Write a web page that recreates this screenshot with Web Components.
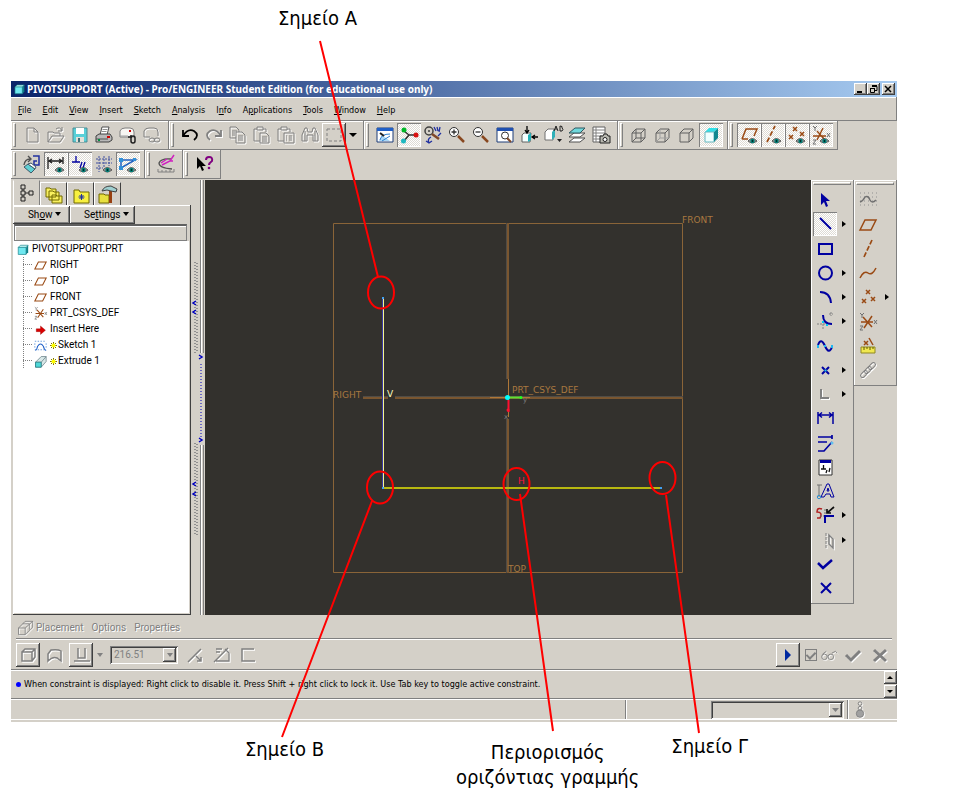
<!DOCTYPE html>
<html lang="el">
<head>
<meta charset="utf-8">
<title>PIVOTSUPPORT (Active) - Pro/ENGINEER</title>
<style>
	body {
		margin: 0;
		background: #ffffff;
	}
</style>
</head>
<body>
<annotated-page></annotated-page>

<script>
const shared = `
	:host { display: block; box-sizing: border-box; }
	* { box-sizing: border-box; }
	button {
		margin: 0;
		padding: 0;
		border: 0;
		background: none;
		font: inherit;
		color: inherit;
	}
	svg { display: block; }
	.raised {
		background: #d4d0c8;
		box-shadow: inset -1px -1px #404040, inset 1px 1px #ffffff, inset -2px -2px #808080;
	}
	.sunken {
		background: #d4d0c8;
		box-shadow: inset 1px 1px #808080, inset -1px -1px #ffffff, inset 2px 2px #404040;
	}
`;

const eye = `<path d="M11 18q4-5 9 0q-5 4-9 0z" fill="#9a9a9a" stroke="#404040" stroke-width=".8"/><circle cx="15.5" cy="18" r="2.2" fill="#008078"/><circle cx="15.5" cy="18" r=".8" fill="#000"/>`;
const x = (cx, cy, r, c) => `<path d="M${cx - r} ${cy - r}l${2 * r} ${2 * r}m0 ${-2 * r}l${-2 * r} ${2 * r}" stroke="${c}" stroke-width="1.5"/>`;
const brown = '#9a4a14';
const navy = '#0000a0';

// every glyph is drawn in a 24 x 24 box
const icons = {
	newFile: `<g class="dim"><path d="M7 5h7l4 4v10H7zM14 5v4h4"/></g>`,
	open: `<g class="dim"><path d="M4 19V9h5l1 1h6v3M4 19l4-6h12l-4 6zM12 6q4-3 6 2m0-4v4h-4"/></g>`,
	save: `<path d="M5 5h14v14H5z" fill="#58d0d8" stroke="#4c8c94"/><path d="M8 5h8v6H8z" fill="#fff"/><path d="M8 14h8v5H8z" fill="#e4e0d8"/><path d="M10 15h2v4h-2z" fill="#407078"/>`,
	print: `<path d="M8 12l2-8h7l-2 8z" fill="#fff" stroke="#505050"/><path d="M10.500 6.500h5m-6 2h5" stroke="#909090"/><path d="M4 13l3-2h11l2 3v3l-3 2H4z" fill="#b8b8b8" stroke="#404040"/><path d="M4 16h12" stroke="#505050"/><path d="M6 16h2v2H6z" fill="#009040"/><path d="M15 13h3v2h-3z" fill="#d00000"/>`,
	mail: `<path d="M4 14V8q1-3 5-3h5q4 0 4 4v5z" fill="#f8f6f2" stroke="#808080"/><path d="M4 13h8" stroke="#a0a0a0"/><path d="M13 8h2" stroke="#d00000" stroke-width="2"/><path d="M12 14h3v-2" stroke="#202020" stroke-width="1.500"/><rect x="15" y="13" width="4" height="7" rx="2" stroke="#202020" stroke-width="1.500"/>`,
	mailLink: `<g class="dim"><path d="M4 14V8q1-3 5-3h5q4 0 4 4v4M4 14h6"/><ellipse cx="12" cy="17" rx="3" ry="2"/><ellipse cx="17" cy="17" rx="3" ry="2"/></g>`,
	undo: `<path d="M5 7v6h6" stroke="#000" stroke-width="1.800"/><path d="M5 13q5-8 11-5q6 4 0 9" stroke="#000" stroke-width="1.800"/>`,
	redo: `<g class="dim"><path d="M19 7v6h-6" stroke-width="1.800"/><path d="M19 13q-5-8-11-5q-6 4 0 9" stroke-width="1.800"/></g>`,
	copy: `<g class="dim"><path d="M10 15H4V4h6l3 3v2M6 8h5M6 10h3M6 12h3M10 9h6l3 3v8h-9zM12 13h5M12 15h5M12 17h5"/></g>`,
	paste: `<g class="dim"><path d="M10 18H4V6h3M13 6h3v3M7 4h6v3H7zM10 10h6l3 3v7h-9zM12 14h5M12 16h5M12 18h5"/></g>`,
	pasteSpecial: `<g class="dim"><path d="M10 18H4V6h3M13 6h3v3M7 4h6v3H7zM10 10h10v10H10zM12 13h1m2 0h3m-6 2h1m2 0h3m-6 2h1m2 0h3"/></g>`,
	find: `<g class="dim"><path d="M4 18v-6l3-7h2l1 4h4l1-4h2l3 7v6h-5v-6h-6v6zM7 8v10M17 8v10"/></g>`,
	select: `<path d="M5 6h14v12H5z" stroke="#808080" stroke-dasharray="3 2"/>`,
	repaint: `<path d="M4 5h16v14H4z" fill="#fff" stroke="#1c3c78"/><path d="M4 5h16v3H4z" fill="#2060c8"/><path d="M9 12l8 6H6z" fill="#a8d8f8"/><path d="M7 17q1-6 10-6M9 18l8-5" stroke="#3080d0"/><path d="M7 10l4 3" stroke="#202020" stroke-width="2"/>`,
	spin: `<path d="M12 12l-5-4m5 4l-5 6m5-6h6" stroke="#303030" stroke-width="1.500"/><circle cx="7" cy="7" r="2.500" fill="#00b828"/><circle cx="6.500" cy="18" r="2.500" fill="#20b8c0"/><circle cx="19" cy="12" r="2.500" fill="#d81010"/>`,
	orient: `<circle cx="8" cy="8" r="4" stroke="#404040" stroke-width="1.500"/><circle cx="8" cy="8" r="1" fill="#404040"/><path d="M11 11l7 5" stroke="#804828" stroke-width="2.500"/><path d="M13 4l2 4m1-4l1 4m2-4l-1 5m2 1l-3 3M10 14q-4 2-2 6m-3-2l3 2 3-2" stroke="#2030a0" stroke-width="1.300"/>`,
	zoomIn: `<circle cx="9" cy="9" r="4.500" fill="#fff" stroke="#303030"/><path d="M6.500 9h5M9 6.500v5" stroke="#303030" stroke-width="1.300"/><path d="M13 13l6 6" stroke="#884820" stroke-width="2.500"/>`,
	zoomOut: `<circle cx="9" cy="9" r="4.500" fill="#fff" stroke="#303030"/><path d="M6.500 9h5" stroke="#303030" stroke-width="1.300"/><path d="M13 13l6 6" stroke="#884820" stroke-width="2.500"/>`,
	refit: `<path d="M4 5h16v14H4z" fill="#fff" stroke="#1c3c78"/><path d="M4 5h16v3H4z" fill="#2050b0"/><circle cx="12" cy="12.500" r="3.500" stroke="#303030"/><path d="M14 15l4 4" stroke="#804828" stroke-width="2"/>`,
	viewDir: `<path d="M5 12l2-2h7l-1 9H5z" fill="#f4ffff" stroke="#606060"/><path d="M11 12l3-2v7l-3 2z" fill="#20b0b8"/><path d="M10 3v6m-2-2l2 3 2-3M21 14h-5m2-2l-3 2 3 2" stroke="#000" stroke-width="1.300"/>`,
	savedViews: `<path d="M4 9l3-3h6l-1 11H4z" fill="#fff" stroke="#707070"/><path d="M11 9l3-3v8l-3 3z" fill="#30b0b8"/><path d="M13 8l2-5 2 5m-3-2h2M19 3v5h2q2-2 0-3q1-2-2-2" stroke="#202020"/><path d="M16 16h5l-2.500 3z" fill="#202020"/>`,
	layers: `<path d="M4 19l5-4h11l-5 4zM4 14l5-4h11l-5 4z" fill="#fff" stroke="#505050"/><path d="M4 10l6-5h10l-5 5z" fill="#70d8dc" stroke="#305860"/>`,
	viewManager: `<path d="M4 4h12v15H4z" fill="#fff" stroke="#606060"/><path d="M4 7h12M4 10h12M4 13h9M4 16h7M7 4v15" stroke="#808080"/><path d="M11 13h3l1-2h3l1 2h2v7H11z" fill="#b8b8b0" stroke="#202020"/><circle cx="16" cy="16.500" r="2" fill="#fff" stroke="#202020"/>`,
	wireframe: `<path d="M5 10h9v9H5zM9 6h9v9H9zM5 10l4-4m5 4l4-4M5 19l4-4m5 4l4-4" stroke="#606060"/>`,
	hiddenLine: `<path d="M5 10h9v9H5zM5 10l4-4h9v9l-4 4m0-9l4-4" stroke="#606060"/><path d="M9 6v9h9M5 19l4-4" stroke="#a0a0a0"/>`,
	noHidden: `<path d="M5 10h9v9H5zM5 10l4-4h9v9l-4 4m0-9l4-4" stroke="#606060"/>`,
	shaded: `<path d="M6 9l4-4h9l-4 4z" fill="#30e0e8"/><path d="M6 9h9v10H6z" fill="#f0ffff" stroke="#68b8c0"/><path d="M15 9l4-4v10l-4 4z" fill="#108890"/>`,
	planeEye: `<path d="M5 16l4-10h11l-3 7M5 16h6" stroke="${brown}" stroke-width="1.500"/>${eye}`,
	axisEye: `<path d="M6 19l8-16" stroke="${brown}" stroke-width="1.700" stroke-dasharray="5 2"/>${eye}`,
	pointEye: x(10, 6, 2, brown) + x(6, 14, 2, brown) + x(17, 11, 2, brown) + eye,
	csysEye: `<path d="M4 13h13M8 8l8 9M14 5L8 17" stroke="${brown}" stroke-width="1.400"/><path d="M4 3l2 2 2-2M6 5v3M18 10l3 4m0-4l-3 4M4 17h3l-3 4h3" stroke="#707070"/>${eye}`,

	toSketch: `<path d="M13 4h6v9h-5V9h3" stroke="#2030a0" stroke-width="1.500"/><path d="M4 13q1-6 6-6M8 4l3 3-3 3" stroke="#505050" stroke-width="1.400"/><path d="M4 15l4-3 7 5-4 4z" fill="#60d0d4" stroke="#405868"/><path d="M8 12l3-1 5 4-1 2z" fill="#fff" stroke="#405868"/>`,
	dimEye: `<path d="M4 5v12M19 5v7M5 9h13M8 7L5 9l3 2M15 7l3 2-3 2" stroke="#202020" stroke-width="1.300"/>${eye}`,
	consEye: `<path d="M4 10h8M8 4v6M12 16l2-6m1 6l2-6" stroke="${navy}" stroke-width="1.300"/>${eye}`,
	gridEye: `<path d="M7 4v16M12 4v11M17 4v10M4 7h16M4 11h16M4 16h7" stroke="#4050a0" stroke-dasharray="2 1"/>${eye}`,
	vertexEye: `<path d="M5 8h14L5 16z" stroke="#2060c0" stroke-width="1.500"/><path d="M3 6h4v4H3zM17 6h3v3h-3zM3 14h4v4H3z" fill="#3090d8"/>${eye}`,
	analysis: `<path d="M17 7q-10-1-12 4q0 5 13 6" stroke="#505050" stroke-width="1.300"/><path d="M7 11l6-4M8 13l8-4 4-6M16 9l3 0" stroke="#d020c0" stroke-width="1.500"/><path d="M4 17v3h16v-3M8 18v2m4-2v2m4-2v2" stroke="#808080"/>`,
	help: `<path d="M5 5v12l3-3 2 5 2-1-2-4h4z" fill="#000"/><path d="M14 8q0-3 3-3q4 0 3 4q-3 2-3 4" stroke="#800080" stroke-width="2"/><circle cx="17" cy="16" r="1.300" fill="#800080"/>`,

	arrow: `<path d="M8 5v12l3-3 2 5 2-1-2-5h4z" fill="${navy}"/>`,
	line: `<path d="M7 6l11 11" stroke="${navy}" stroke-width="2"/>`,
	rect: `<path d="M6 7h13v10H6z" stroke="${navy}" stroke-width="2"/>`,
	circle: `<circle cx="12.500" cy="12" r="6.500" stroke="${navy}" stroke-width="2"/>`,
	arc: `<path d="M7 7q10 0 11 11" stroke="${navy}" stroke-width="2"/>`,
	fillet: `<path d="M4 15h8m-2 0v6m8-18v4m-2-2h4" stroke="#808080" stroke-dasharray="2 1"/><path d="M10 6q0 9 9 9" stroke="${navy}" stroke-width="2"/><path d="M9 12h2v2H9zM13 15h2v2h-2z" fill="#00c8f0"/>`,
	spline: `<path d="M5 11q3-8 7 1t7 1" stroke="${navy}" stroke-width="2"/><path d="M4 11h2v3H4zM11 11h2v2h-2zM18 11h2v3h-2z" fill="#20b8f0"/>`,
	point: `<path d="M9 9l7 7m0-7l-7 7" stroke="${navy}" stroke-width="2"/><path d="M11.500 11.500h2v2h-2z" fill="#20c8f0"/>`,
	useEdge: `<g class="dim"><path d="M8 7v9h8" stroke-width="2"/></g>`,
	dimension: `<path d="M5 6v12M20 6v12M6 9h13M9 6.500L6 9l3 2.500M16 6.500L19 9l-3 2.500" stroke="${navy}" stroke-width="1.500"/>`,
	modify: `<path d="M5 6h14M19 4v4M5 11h9M5 20h6l8-9" stroke="${navy}" stroke-width="1.700"/><circle cx="19" cy="12" r="1.500" fill="#60c0f0"/>`,
	constrain: `<path d="M6 5h13v15H6z" fill="#fff" stroke="#303030"/><path d="M7 5h11v3H7z" fill="${navy}"/><path d="M8 14h5m-2.500-4v4M13 18l1-3m2 2l1-4" stroke="#101010" stroke-width="1.300"/>`,
	text: `<path d="M6 6v12M4 6h5" stroke="#707070"/><path d="M8 18l6-13h2l5 13h-3l-1-3h-4l-2 3zM14 12h2l-1-3z" stroke="${navy}"/><circle cx="6" cy="18" r="1.700" stroke="#3090d0"/>`,
	trim: `<path d="M9 6q-5-2-5 3 6 0 3 6l-3 0" stroke="#b02020" stroke-width="1.500"/><path d="M7 13h5m0-7v6" stroke="#707070" stroke-dasharray="2 1"/><path d="M12 20v-7h9" stroke="${navy}" stroke-width="2"/><path d="M21 4l-7 6m0-4v4h4" stroke="#101010" stroke-width="1.700"/>`,
	mirror: `<g class="dim"><path d="M13 5v15" stroke-dasharray="3 1"/><path d="M16 7v9l4 4v-9z" stroke-width="1.500"/></g>`,
	done: `<path d="M5 11l5 5 9-8" stroke="${navy}" stroke-width="2.500"/>`,
	quit: `<path d="M8 7l10 10m0-10L8 17" stroke="${navy}" stroke-width="2"/>`,

	sketchTool: `<path d="M4 5h17M4 9h17M4 13h17M4 17h17" stroke="#909090" stroke-dasharray="1 3"/><path d="M4 14q3-1 5-5 3-2 5 3 2 4 6 0" stroke="#707070" stroke-width="1.500"/>`,
	plane: `<path d="M4 17l5-10h11l-5 10z" stroke="${brown}" stroke-width="1.500"/>`,
	axis: `<path d="M8 20l8-17" stroke="${brown}" stroke-width="1.700" stroke-dasharray="5 2"/>`,
	curve: `<path d="M4 17q4-8 8-5t8-5" stroke="${brown}" stroke-width="1.500"/>`,
	points: x(12, 7, 2, brown) + x(8, 16, 2, brown) + x(17, 14, 2, brown),
	csys: `<path d="M5 12h12M7 7l9 10M16 6L8 18" stroke="${brown}" stroke-width="1.500"/><path d="M4 3l2 2 2-2M6 5v3M18 10l3 4m0-4l-3 4M4 16h3l-3 4h3" stroke="#707070"/>`,
	analysisPt: x(10, 9, 2, brown) + `<path d="M13 4l4 7" stroke="${brown}" stroke-width="1.500"/><path d="M5 13h14v6H5z" fill="#f0e850" stroke="#908820"/><path d="M8 13v3m3-3v2m3-2v3m3-3v2" stroke="#605800"/>`,
	chain: `<g class="dim"><rect x="4" y="14" width="8" height="4" rx="2" transform="rotate(-45 8 16)"/><rect x="8" y="10" width="8" height="4" rx="2" transform="rotate(-45 12 12)"/><rect x="12" y="6" width="8" height="4" rx="2" transform="rotate(-45 16 8)"/></g>`,

	tabTree: `<path d="M6 4h4v4H6zM6 10h4v4H6zM6 16h4v4H6zM14 10h4v4h-4zM8 8v2m0 4v2m2-4h4" stroke="#202020"/>`,
	tabFolders: `<path d="M4 5h4l1 1h5v8H4zM7 8h4l1 1h5v8H7zM10 12h4l1 1h5v7H10z" fill="#f8f060" stroke="#706800"/>`,
	tabFavorites: `<path d="M5 7h5l1 2h9v11H5z" fill="#f8f040" stroke="#706800"/><path d="M12.500 11v6m-3-3h6m-5-2l4 4m0-4l-4 4" stroke="#2030a0"/>`,
	tabHammer: `<path d="M3 11h5l1 1h4v8H3z" fill="#e8e040" stroke="#706800"/><path d="M14.500 8v12" stroke="#984010" stroke-width="3"/><path d="M6 8q2-5 9-5l6 3-1 3-5-1-4-1z" fill="#a0d0d0" stroke="#404040"/>`,
	part: `<path d="M6 9l3-3h11l-3 3z" fill="#d0ffff" stroke="#208890"/><path d="M17 9l3-3v10l-3 3z" fill="#108088"/><path d="M6 9h11v10H6z" fill="#70e8f0" stroke="#208890"/>`,
	insert: `<path d="M6 11h6V7l7 6-7 6v-4H6z" fill="#d80000" stroke="#900000" stroke-width=".5"/>`,
	sketch: `<path d="M4 6h16M4 18h16M4 9v8m16-8v8" stroke="#3078d0" stroke-dasharray="2 2"/><path d="M5 19q2-1 3-6 4-6 8 0 1 5 4 6" stroke="#2060c8" stroke-width="1.500"/>`,
	extrude: `<path d="M5 13h8v7H5zM5 13l8-8h7v7l-7 8M13 13l7-8" stroke="#607880" fill="#d8e8e8"/><path d="M5 13h8v7H5z" fill="#50d8d8" stroke="#207880"/>`,

	ghostExtrude: `<g class="dim"><path d="M3 12h8v8H3zM3 12l8-8h9v7l-9 9M11 12l9-8M8 7h8v7"/></g>`,
	solid: `<g class="dim"><path d="M6 9h10v9H6zM6 9l3-3h10v8l-3 4M16 9l3-3" stroke-width="1.500"/></g>`,
	surface: `<g class="dim"><path d="M5 18V11l3-4q7-1 10 1v10l-4-3q-4-2-9 3z" stroke-width="1.500"/></g>`,
	depth: `<g class="dim"><path d="M9 5v10h7V5M5 18h16" stroke-width="1.500"/></g>`,
	flip: `<g class="dim"><path d="M5 19L18 6M13 13l5 5m0-4v4h-4" stroke-width="1.500"/></g>`,
	removeMat: `<g class="dim"><path d="M5 19L19 5M7 18h13V10l-4-4M7 6h6M7 9h4" stroke-width="1.300"/></g>`,
	thicken: `<g class="dim"><path d="M18 6H6v12h13" stroke-width="1.500"/></g>`,
	play: `<path d="M9 6l6 6-6 6z" fill="#0028a0"/>`,
	glasses: `<g class="dim"><circle cx="7" cy="14" r="3"/><circle cx="14" cy="14" r="3"/><path d="M10 13h1M5 11l4-3M15 10l4-2 2 2"/></g>`,
	okDim: `<g class="dim"><path d="M5 12l5 5 9-9" stroke-width="3"/></g>`,
	noDim: `<g class="dim"><path d="M6 7l12 11m0-11L6 18" stroke-width="3"/></g>`,
	light: `<g class="dim"><circle cx="12" cy="5" r="2"/><circle cx="12" cy="10" r="2"/><circle cx="12" cy="16" r="4" fill="#a0a0a0"/></g>`
};

function icon(name, size = 24) {
	return `<svg width="${size}" height="${size}" viewBox="0 0 24 24" fill="none" aria-hidden="true">
		<style>.dim { stroke: #808080; filter: drop-shadow(1px 1px 0 #ffffff); }</style>
		${icons[name]}
	</svg>`;
}

class ToolButton extends HTMLElement {
	connectedCallback() {
		this.attachShadow({ mode: 'open' });
		const name = this.getAttribute('icon');
		const mode = this.getAttribute('mode') || '';
		this.shadowRoot.innerHTML = `
			<style>${shared}
				:host { display: flex; align-items: center; }
				button { width: 24px; height: 24px; }
				.pressed {
					background: repeating-conic-gradient(#ffffff 0 25%, #dedbd4 0 50%) 0 0 / 2px 2px;
					box-shadow: inset 1px 1px #808080, inset -1px -1px #ffffff;
				}
				.flyout {
					margin-left: 5px;
					border: 3px solid transparent;
					border-left: 4px solid #000000;
					border-right: 0;
				}
			</style>
			<button type="button" class="${mode}" aria-label="${name}">${icon(name)}</button>
			${this.hasAttribute('flyout') ? '<span class="flyout"></span>' : ''}
		`;
	}
}
customElements.define('tool-button', ToolButton);

class ToolGroup extends HTMLElement {
	connectedCallback() {
		this.attachShadow({ mode: 'open' });
		this.shadowRoot.innerHTML = `
			<style>${shared}
				:host {
					display: flex;
					align-items: center;
					height: 29px;
					padding: 0 4px 0 2px;
					border: 1px solid #808080;
					border-width: 0 1px 1px 0;
					box-shadow: inset 1px 1px #ffffff;
				}
				.grip {
					width: 3px;
					height: 24px;
					margin-right: 4px;
					border: 1px solid #ffffff;
					border-right-color: #808080;
					border-bottom-color: #808080;
				}
			</style>
			<span class="grip"></span>
			<slot></slot>
		`;
	}
}
customElements.define('tool-group', ToolGroup);

class ToolColumn extends HTMLElement {
	connectedCallback() {
		this.attachShadow({ mode: 'open' });
		this.shadowRoot.innerHTML = `
			<style>${shared}
				:host {
					display: flex;
					flex-direction: column;
					align-self: flex-start;
					justify-content: space-between;
					width: 43px;
					padding: 2px 2px 3px;
					border: 1px solid #808080;
					border-width: 0 1px 1px 0;
					box-shadow: inset 1px 1px #ffffff;
				}
				.grip {
					height: 3px;
					margin-bottom: 3px;
					border: 1px solid #ffffff;
					border-right-color: #808080;
					border-bottom-color: #808080;
				}
			</style>
			<span class="grip"></span>
			<slot></slot>
		`;
	}
}
customElements.define('tool-column', ToolColumn);

class TitleBar extends HTMLElement {
	connectedCallback() {
		this.attachShadow({ mode: 'open' });
		this.shadowRoot.innerHTML = `
			<style>${shared}
				:host {
					display: flex;
					align-items: center;
					height: 16px;
					padding: 0 2px 0 0;
					background: linear-gradient(to right, #0a246a, #a6caf0);
					color: #ffffff;
					font-family: "Noto Sans", sans-serif;
					font-weight: bold;
					font-size: 10px;
				}
				.title { flex: 1; white-space: nowrap; }
				button { width: 13px; height: 12px; color: #000000; }
				.close { margin-left: 2px; }
			</style>
			${icon('part', 16)}
			<span class="title"><slot></slot></span>
			<button type="button" class="raised" aria-label="Minimize"><svg width="13" height="12"><path d="M3 8h5v2H3z"/></svg></button>
			<button type="button" class="raised" aria-label="Restore"><svg width="13" height="12" fill="none" stroke="#000"><path d="M5 3.500h5v4H8M3.500 5.500h4v4h-4zM5 2.500h5M3 5.500h5"/></svg></button>
			<button type="button" class="raised close" aria-label="Close"><svg width="13" height="12" stroke="#000" stroke-width="1.500"><path d="M3 3l6 6m0-6l-6 6"/></svg></button>
		`;
	}
}
customElements.define('title-bar', TitleBar);

class MenuBar extends HTMLElement {
	connectedCallback() {
		this.attachShadow({ mode: 'open' });
		const items = ['_File', '_Edit', '_View', '_Insert', '_Sketch', '_Analysis', 'I_nfo', 'A_pplications', '_Tools', '_Window', '_Help'];
		this.shadowRoot.innerHTML = `
			<style>${shared}
				:host {
					display: flex;
					align-items: center;
					gap: 11px;
					height: 24px;
					padding: 2px 7px 0;
					border: 1px solid #808080;
					border-width: 0 1px 1px 0;
					box-shadow: inset 0 1px #ffffff;
				}
				button { white-space: nowrap; }
			</style>
			${items.map(item => `<button type="button">${item.replace(/_(.)/, '<u>$1</u>')}</button>`).join('')}
		`;
	}
}
customElements.define('menu-bar', MenuBar);

class ModelTree extends HTMLElement {
	connectedCallback() {
		this.attachShadow({ mode: 'open' });
		const rows = [
			['plane', 'RIGHT'],
			['plane', 'TOP'],
			['plane', 'FRONT'],
			['csys', 'PRT_CSYS_DEF'],
			['insert', 'Insert Here'],
			['sketch', 'Sketch 1', true],
			['extrude', 'Extrude 1', true]
		];
		const star = `<svg class="star" width="7" height="9" stroke="#807800"><path d="M3.500 1v7M0 4.500h7M1 2l5 5m0-5L1 7"/><circle cx="3.500" cy="4.500" r="2" fill="#ffff00" stroke="none"/></svg>`;
		this.shadowRoot.innerHTML = `
			<style>${shared}
				:host {
					display: flex;
					flex-direction: column;
					width: 180px;
					padding-left: 2px;
					font-family: Roboto, sans-serif;
					font-size: 10px;
				}
				.tabs { display: flex; align-items: flex-end; height: 25px; }
				.tabs button {
					width: 27px;
					height: 23px;
					display: flex;
					justify-content: center;
					border: 1px solid #ffffff;
					border-right-color: #404040;
					border-bottom: 0;
				}
				.tabs .active { height: 25px; border-top-color: #d4d0c8; border-right-color: #808080; }
				.panel {
					flex: 1;
					display: flex;
					flex-direction: column;
					padding: 1px 2px 2px 0;
					box-shadow: inset -1px -1px #404040, inset 1px 1px #ffffff;
				}
				.actions { display: flex; height: 18px; }
				.actions button { width: 57px; padding-left: 6px; white-space: nowrap; }
				.actions .wide { width: 65px; padding-left: 8px; }
				.down {
					display: inline-block;
					margin-bottom: 2px;
					border: 3px solid transparent;
					border-top: 4px solid #000000;
					border-bottom: 0;
				}
				.head { height: 17px; margin: 0 2px 0 1px; border: 1px solid #808080; border-top: 2px solid #606060; box-shadow: inset 1px 1px #ffffff; }
				.list { flex: 1; margin: 0 0 0 1px; padding: 0; list-style: none; background: #ffffff; }
				.list ul { margin: 0; padding: 0; list-style: none; }
				.row { display: flex; align-items: center; height: 16px; white-space: nowrap; }
				.row svg { flex: none; }
				.root { gap: 1px; }
				.child::before { content: ""; width: 9px; height: 1px; margin-left: 9px; border-top: 1px dotted #808080; }
				.child { background: linear-gradient(#808080 50%, transparent 0) 9px 0 / 1px 2px repeat-y; }
				.child .glyph { margin-right: 1px; }
				.star { margin-right: 1px; }
			</style>
			<div class="tabs">
				<button type="button" class="active" aria-label="Model Tree">${icon('tabTree')}</button>
				<button type="button" aria-label="Folder Browser">${icon('tabFolders')}</button>
				<button type="button" aria-label="Favorites">${icon('tabFavorites')}</button>
				<button type="button" aria-label="Connections">${icon('tabHammer')}</button>
			</div>
			<div class="panel">
				<div class="actions">
					<button type="button" class="raised">Sh<u>o</u>w <span class="down"></span></button>
					<button type="button" class="raised wide">Se<u>t</u>tings <span class="down"></span></button>
				</div>
				<div class="head"></div>
				<ul class="list">
					<li>
						<div class="row root">${icon('part', 17)}<span>PIVOTSUPPORT.PRT</span></div>
						<ul>
							${rows.map(([glyph, text, isNew]) => `<li class="row child"><span class="glyph">${icon(glyph, 17)}</span>${isNew ? star : ''}<span>${text}</span></li>`).join('')}
						</ul>
					</li>
				</ul>
			</div>
		`;
	}
}
customElements.define('model-tree', ModelTree);

class SplitterBar extends HTMLElement {
	connectedCallback() {
		this.attachShadow({ mode: 'open' });
		this.shadowRoot.innerHTML = `
			<style>${shared}
				:host { width: 14px; }
			</style>
			<svg width="14" height="435" fill="none">
				<path d="M4 82v91M4 263v92M6 83v90M6 264v91" stroke="#909090" stroke-width="2" stroke-dasharray="1 2"/>
				<path d="M9.500 0v173M9.500 265v170M12.500 0v173M12.500 265v170" stroke="#808080"/>
				<path d="M10.500 0v173M10.500 265v170" stroke="#ffffff"/>
				<path d="M10 184v74" stroke="#0000c0" stroke-dasharray="1 2"/>
				<path d="M5 121l-3 2 3 2M5 130l-3 2 3 2M5 302l-3 2 3 2M5 312l-3 2 3 2M8 175l3 2-3 2M8 258l3 2-3 2" stroke="#0000c0" stroke-width="1.500"/>
			</svg>
		`;
	}
}
customElements.define('splitter-bar', SplitterBar);

class SketchCanvas extends HTMLElement {
	connectedCallback() {
		this.attachShadow({ mode: 'open' });
		this.shadowRoot.innerHTML = `
			<style>${shared}
				:host { flex: 1; min-width: 0; overflow: hidden; background: #33312d; }
				text { font-family: "DejaVu Sans", sans-serif; font-size: 9px; fill: #a87840; stroke: none; }
				.axis { font-size: 7px; fill: #808080; }
			</style>
			<svg width="606" height="435" fill="none">
				<path d="M128.500 43.500h349v349h-349z" stroke="#8a6438"/>
				<path d="M303 43v156M303 239v154M158 218h25M190 218h288" stroke="#7a5630" stroke-width="2"/>
				<path d="M301.500 43v156M301.500 239v154M158 216.500h25M190 216.500h288" stroke="#504c46"/>
				<path d="M303.500 199v38M285 217.500h40" stroke="#b07838"/>
				<path d="M303.500 220v12" stroke="#ff1030" stroke-width="2"/>
				<path d="M303 217.500h13" stroke="#60e030" stroke-width="2"/>
				<circle cx="316" cy="217.500" r="1.500" fill="#20ff20"/>
				<circle cx="303" cy="230" r="1.500" fill="#ff1030"/>
				<circle cx="302.500" cy="217.500" r="2.500" fill="#00ffff"/>
				<path d="M178.500 118v190" stroke="#f4f490"/>
				<path d="M177.500 118v190" stroke="#3838a8"/>
				<path d="M178 308h278" stroke="#b8b810" stroke-width="2"/>
				<path d="M178 117v2M177 308h2M455 308h2" stroke="#40a0f0" stroke-width="2"/>
				<text x="477" y="43">FRONT</text>
				<text x="128" y="218">RIGHT</text>
				<text x="307" y="213">PRT_CSYS_DEF</text>
				<text x="303" y="392">TOP</text>
				<text x="182" y="217" style="fill: #ffffc0">V</text>
				<text x="313" y="304" style="fill: #ff1040">H</text>
				<text class="axis" x="318" y="222">y</text>
				<text class="axis" x="299" y="239">x</text>
			</svg>
		`;
	}
}
customElements.define('sketch-canvas', SketchCanvas);

class FeatureDashboard extends HTMLElement {
	connectedCallback() {
		this.attachShadow({ mode: 'open' });
		this.shadowRoot.innerHTML = `
			<style>${shared}
				:host {
					padding: 0 5px;
					font-family: Roboto, sans-serif;
					font-size: 10px;
					color: #808080;
				}
				.row { display: flex; align-items: center; }
				.top { height: 24px; padding-top: 2px; gap: 8px; border-bottom: 1px solid #808080; box-shadow: 0 1px #ffffff; }
				.top button { text-shadow: 1px 1px #ffffff; }
				.top svg { margin-right: -8px; }
				.tools { height: 30px; padding-top: 1px; gap: 1px; }
				.down {
					margin: 0 6px 0 3px;
					border: 3px solid transparent;
					border-top: 4px solid #808080;
					border-bottom: 0;
				}
				.combo { display: flex; align-items: center; width: 68px; height: 18px; margin-right: 4px; padding: 2px; }
				select {
					flex: 1;
					appearance: none;
					border: 0;
					padding: 0 0 0 2px;
					background: none;
					font: inherit;
					color: #808080;
					opacity: 1;
				}
				.drop { display: flex; align-items: center; justify-content: center; width: 13px; height: 14px; }
				.drop .down { margin: 0; }
				.space { flex: 1; }
				.tools tool-button + tool-button { margin-left: 2px; }
				input {
					appearance: none;
					display: grid;
					place-items: center;
					width: 12px;
					height: 12px;
					margin: 0 0 0 4px;
					border: 1px solid #808080;
				}
				input::before {
					content: "";
					width: 4px;
					height: 7px;
					margin-bottom: 2px;
					border: solid #808080;
					border-width: 0 2px 2px 0;
					transform: rotate(45deg);
				}
			</style>
			<div class="row top">
				${icon('ghostExtrude', 20)}
				<button type="button">Placement</button>
				<button type="button">Options</button>
				<button type="button">Properties</button>
			</div>
			<div class="row tools">
				<tool-button class="raised" icon="solid"></tool-button>
				<tool-button icon="surface"></tool-button>
				<span></span>
				<tool-button class="raised" icon="depth"></tool-button>
				<span class="down"></span>
				<span class="combo sunken">
					<select aria-label="Depth" disabled><option>216.51</option></select>
					<span class="drop raised"><span class="down"></span></span>
				</span>
				<tool-button icon="flip"></tool-button>
				<span></span>
				<tool-button icon="removeMat"></tool-button>
				<tool-button icon="thicken"></tool-button>
				<span class="space"></span>
				<tool-button class="raised" icon="play"></tool-button>
				<input type="checkbox" id="preview" checked disabled>
				<label for="preview" aria-label="Preview">${icon('glasses', 22)}</label>
				<tool-button icon="okDim"></tool-button>
				<tool-button icon="noDim"></tool-button>
			</div>
		`;
	}
}
customElements.define('feature-dashboard', FeatureDashboard);

class MessageArea extends HTMLElement {
	connectedCallback() {
		this.attachShadow({ mode: 'open' });
		this.shadowRoot.innerHTML = `
			<style>${shared}
				:host {
					display: flex;
					align-items: center;
					height: 30px;
					padding-left: 5px;
					border-top: 1px solid #808080;
					border-bottom: 1px solid #808080;
					box-shadow: inset 0 1px #ffffff;
				}
				.dot { width: 5px; height: 5px; margin-right: 3px; border-radius: 50%; background: #0000ff; }
				.text { flex: 1; white-space: nowrap; }
				.scroll { display: flex; flex-direction: column; gap: 1px; }
				.scroll button { width: 13px; height: 13px; }
			</style>
			<span class="dot"></span>
			<span class="text"><slot></slot></span>
			<span class="scroll">
				<button type="button" class="raised" aria-label="Up"><svg width="13" height="13"><path d="M3 8h6L6 5z"/></svg></button>
				<button type="button" class="raised" aria-label="Down"><svg width="13" height="13"><path d="M3 5h6L6 8z"/></svg></button>
			</span>
		`;
	}
}
customElements.define('message-area', MessageArea);

class StatusBar extends HTMLElement {
	connectedCallback() {
		this.attachShadow({ mode: 'open' });
		this.shadowRoot.innerHTML = `
			<style>${shared}
				:host {
					display: flex;
					align-items: center;
					justify-content: flex-end;
					height: 23px;
					padding-right: 26px;
					border-bottom: 2px solid #d4d0c8;
					box-shadow: inset 0 1px #ffffff, inset 0 -1px #ffffff;
				}
				.rule { width: 2px; height: 19px; border-left: 1px solid #808080; border-right: 1px solid #ffffff; }
				.combo { display: flex; width: 133px; height: 18px; margin: 0 3px 0 84px; padding: 2px; }
				select { flex: 1; appearance: none; border: 0; background: none; }
				.drop { width: 13px; height: 14px; }
			</style>
			<span class="rule"></span>
			<span class="combo sunken">
				<select aria-label="Selection filter" disabled></select>
				<span class="drop raised"><svg width="13" height="14" fill="#808080"><path d="M3 5h7L6.500 9z"/></svg></span>
			</span>
			<span class="rule"></span>
			${icon('light', 22)}
		`;
	}
}
customElements.define('status-bar', StatusBar);

const buttons = list => list.split(' ').map(entry => {
	const [name, ...flags] = entry.split(':');
	const mode = flags.includes('on') ? ' mode="pressed"' : flags.includes('up') ? ' mode="raised"' : '';
	return `<tool-button icon="${name}"${mode}${flags.includes('more') ? ' flyout' : ''}></tool-button>`;
}).join('');

class CadWindow extends HTMLElement {
	connectedCallback() {
		this.attachShadow({ mode: 'open' });
		this.shadowRoot.innerHTML = `
			<style>${shared}
				:host {
					background: #d4d0c8;
					color: #000000;
					font: 9px/12px "DejaVu Sans Condensed", "DejaVu Sans", sans-serif;
				}
				.bar { display: flex; }
				.work { display: flex; min-height: 435px; margin-top: 1px; }
				.down { margin: 0 2px 0 3px; border: 4px solid transparent; border-top-color: #000000; border-bottom: 0; }
				.main { min-height: 424px; }
				.datum { min-height: 206px; }
			</style>
			<title-bar>PIVOTSUPPORT (Active) - Pro/ENGINEER Student Edition (for educational use only)</title-bar>
			<menu-bar></menu-bar>
			<div class="bar">
				<tool-group>${buttons('newFile open save print mail mailLink')}</tool-group>
				<tool-group>${buttons('undo redo copy paste pasteSpecial find select:up')}<span class="down"></span></tool-group>
				<tool-group>${buttons('repaint spin:on orient zoomIn zoomOut refit viewDir savedViews layers viewManager')}</tool-group>
				<tool-group>${buttons('wireframe hiddenLine noHidden shaded:on')}</tool-group>
				<tool-group>${buttons('planeEye:on axisEye:on pointEye:on csysEye:on')}</tool-group>
			</div>
			<div class="bar">
				<tool-group>${buttons('toSketch dimEye:on consEye:on gridEye vertexEye:on')}</tool-group>
				<tool-group>${buttons('analysis')}</tool-group>
				<tool-group>${buttons('help')}</tool-group>
			</div>
			<div class="work">
				<model-tree></model-tree>
				<splitter-bar></splitter-bar>
				<sketch-canvas></sketch-canvas>
				<tool-column class="main">${buttons('arrow line:on:more rect circle:more arc:more fillet:more spline point:more useEdge:more dimension modify constrain text trim:more mirror:more done quit')}</tool-column>
				<tool-column class="datum">${buttons('sketchTool plane axis curve points:more csys analysisPt chain')}</tool-column>
			</div>
			<feature-dashboard></feature-dashboard>
			<message-area>When constraint is displayed: Right click to disable it. Press Shift + right click to lock it. Use Tab key to toggle active constraint.</message-area>
			<status-bar></status-bar>
		`;
	}
}
customElements.define('cad-window', CadWindow);

// red ellipses and leader lines that run from the notes onto the sketch
class CalloutLines extends HTMLElement {
	connectedCallback() {
		this.attachShadow({ mode: 'open' });
		this.shadowRoot.innerHTML = `
			<style>${shared}
				:host { position: absolute; top: 0; left: 0; pointer-events: none; }
			</style>
			<svg width="963" height="795" fill="none" stroke="#ff0000" stroke-width="2">
				<ellipse cx="381" cy="292.500" rx="13" ry="16"/>
				<ellipse cx="380" cy="487.500" rx="13" ry="16"/>
				<ellipse cx="516.500" cy="484" rx="13" ry="16"/>
				<ellipse cx="662.500" cy="478" rx="13" ry="16"/>
				<path d="M320 41l58 236M372 501l-90 236M520 494l33 237M666 495l33 238"/>
			</svg>
		`;
	}
}
customElements.define('callout-lines', CalloutLines);

class AnnotatedPage extends HTMLElement {
	connectedCallback() {
		this.attachShadow({ mode: 'open' });
		this.shadowRoot.innerHTML = `
			<style>${shared}
				:host {
					position: relative;
					color: #000000;
					font: 20px/25px "DejaVu Sans Condensed", "DejaVu Sans", sans-serif;
				}
				p { margin: 0; white-space: nowrap; }
				header { height: 81px; padding: 6px 0 0 278px; }
				cad-window { margin: 0 66px 0 11px; }
				footer { display: flex; padding: 12px 0 0 245px; }
				.wide { margin: 6px 32px 0 132px; text-align: center; }
				.first { margin-top: 3px; }
			</style>
			<header><p>Σημείο Α</p></header>
			<cad-window></cad-window>
			<footer>
				<p class="first">Σημείο Β</p>
				<p class="wide">Περιορισμός<br>οριζόντιας γραμμής</p>
				<p>Σημείο Γ</p>
			</footer>
			<callout-lines></callout-lines>
		`;
	}
}
customElements.define('annotated-page', AnnotatedPage);
</script>
</body>
</html>
